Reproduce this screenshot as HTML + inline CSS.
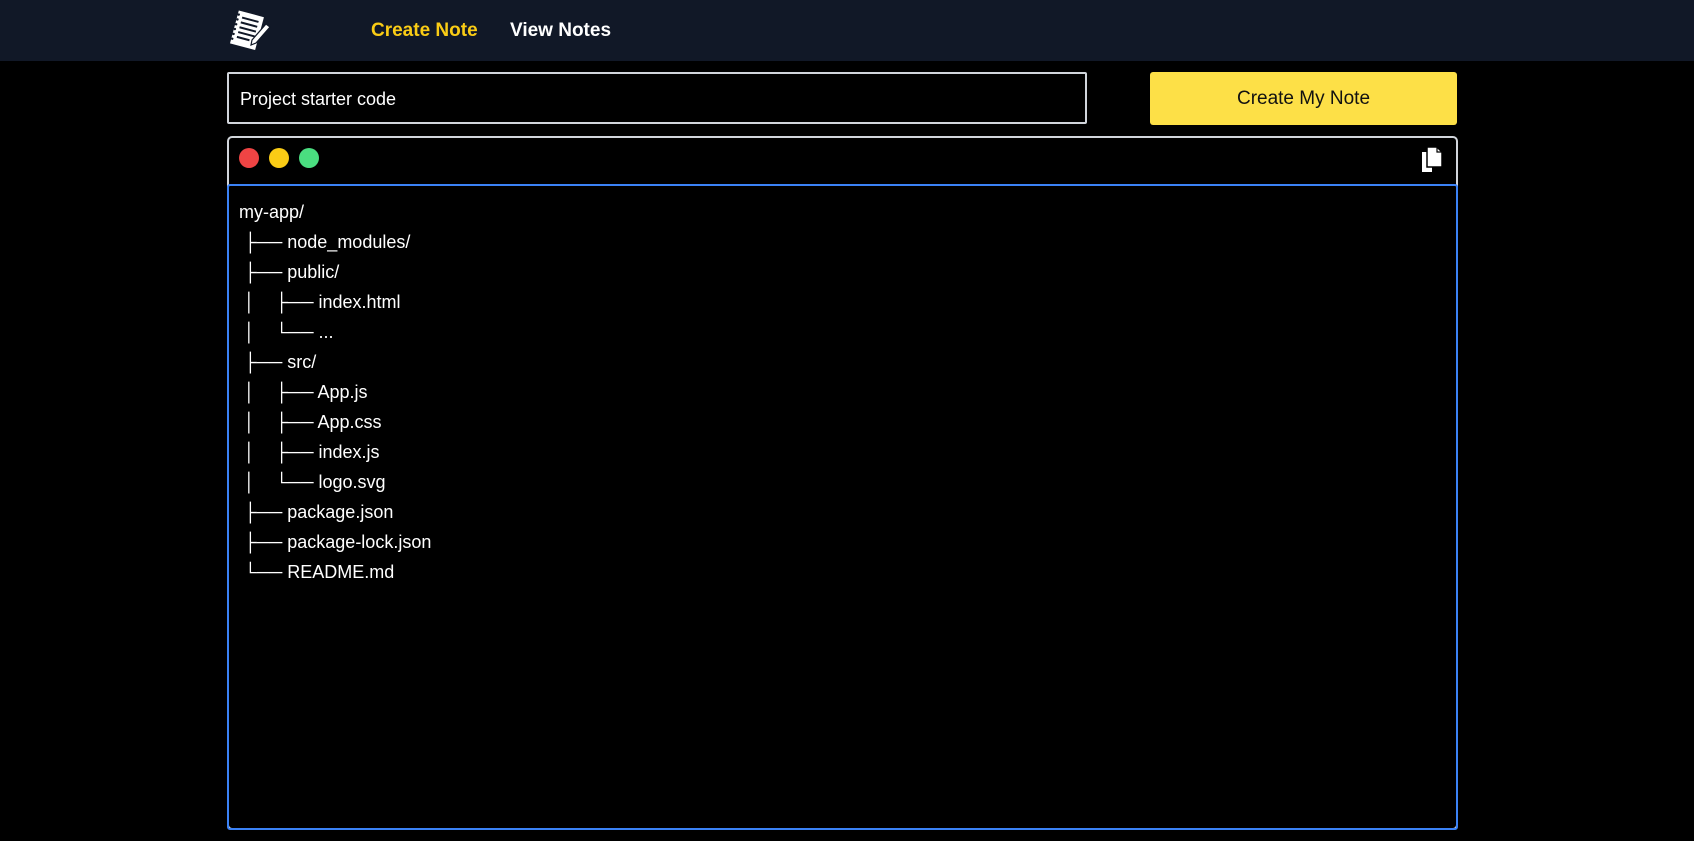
<!DOCTYPE html>
<html><head><meta charset="utf-8"><style>
html,body{margin:0;padding:0;background:#000;width:1694px;height:841px;overflow:hidden;font-family:"Liberation Sans","DejaVu Sans",sans-serif;color:#fff}
.nav{position:absolute;left:0;top:0;width:1694px;height:61px;background:#111827}
.nav a{position:absolute;top:20px;font-size:19px;font-weight:bold;text-decoration:none}
.logo{position:absolute;left:226px;top:7px}
.inp{position:absolute;left:227px;top:72px;width:856px;height:48px;border:2px solid #d1d5db;border-radius:2px;box-sizing:content-box}
.inp span{position:absolute;left:11px;top:15px;font-size:18px}
.btn{position:absolute;left:1150px;top:72px;width:307px;height:53px;background:#fde047;border-radius:3px;color:#111;font-size:19px;text-align:center;line-height:54px}
.ed{position:absolute;left:227px;top:136px;width:1227px;height:690px;border:2px solid #d1d5db;border-radius:5px}
.dot{position:absolute;top:10px;width:20px;height:20px;border-radius:50%}
.ta{position:absolute;left:-2px;top:46px;width:1227px;height:642px;border:2px solid #3b82f6;border-radius:3px}
.ta pre{margin:0;position:absolute;left:10px;top:11px;font-family:"Liberation Sans","DejaVu Sans",sans-serif;font-size:18px;line-height:30px;color:#fff}
</style></head><body>
<div class="nav">
<svg class="logo" width="46" height="46" viewBox="0 0 46 44">
<g transform="rotate(15 20 22)"><rect x="8" y="5" width="26" height="34" fill="#fff"/>
<g stroke="#111827" stroke-width="2"><line x1="13" y1="11" x2="30" y2="11"/><line x1="13" y1="16" x2="30" y2="16"/><line x1="13" y1="21" x2="30" y2="21"/><line x1="13" y1="26" x2="30" y2="26"/><line x1="13" y1="31" x2="26" y2="31"/></g>
<g fill="#111827"><circle cx="9" cy="9" r="1.2"/><circle cx="9" cy="14" r="1.2"/><circle cx="9" cy="19" r="1.2"/><circle cx="9" cy="24" r="1.2"/><circle cx="9" cy="29" r="1.2"/><circle cx="9" cy="34" r="1.2"/></g></g>
<path d="M26 32 L40 16 L44 19 L30 35 L25 37 Z" fill="#fff" stroke="#111827" stroke-width="1.2"/>
</svg>
<a style="left:371px;color:#facc15">Create Note</a>
<a style="left:510px;color:#fff">View Notes</a>
</div>
<div class="inp"><span>Project starter code</span></div>
<div class="btn">Create My Note</div>
<div class="ed">
<div class="dot" style="left:10px;background:#ef4444"></div>
<div class="dot" style="left:40px;background:#facc15"></div>
<div class="dot" style="left:70px;background:#4ade80"></div>
<svg style="position:absolute;left:1191px;top:8px" width="24" height="27" viewBox="0 0 24 27"><path d="M2 6 H12 V26 H2 Z" fill="#fff"/><path d="M7 1 H17 L22 6 V21 H7 Z" fill="#fff" stroke="#000" stroke-width="1.5"/><path d="M17 1 V6 H22" fill="none" stroke="#000" stroke-width="1.2"/></svg>
<div class="ta"><pre>my-app/
 ├── node_modules/
 ├── public/
 │    ├── index.html
 │    └── ...
 ├── src/
 │    ├── App.js
 │    ├── App.css
 │    ├── index.js
 │    └── logo.svg
 ├── package.json
 ├── package-lock.json
 └── README.md</pre></div>
</div>
</body></html>
